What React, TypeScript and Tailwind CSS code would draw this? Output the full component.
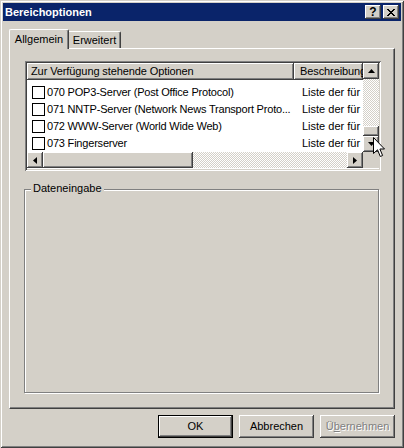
import React from 'react';

const raised =
  'shadow-[inset_-1px_-1px_#404040,inset_1px_1px_#ffffff,inset_-2px_-2px_#808080,inset_2px_2px_#d4d0c8]';
const track = 'bg-[repeating-conic-gradient(#ffffff_0_25%,#d4d0c8_0_50%)] bg-[length:2px_2px]';

const Arrow: React.FC<{ dir: 'up' | 'down' | 'left' | 'right' }> = ({ dir }) => {
  const pts = {
    up: '3.5,0 7,4 0,4',
    down: '0,0 7,0 3.5,4',
    left: '4,0 4,7 0,3.5',
    right: '0,0 4,3.5 0,7',
  }[dir];
  const vertical = dir === 'up' || dir === 'down';
  return (
    <svg width={vertical ? 7 : 4} height={vertical ? 4 : 7} viewBox={vertical ? '0 0 7 4' : '0 0 4 7'}>
      <polygon points={pts} fill="#000" />
    </svg>
  );
};

const ScrollBtn: React.FC<{ dir: 'up' | 'down' | 'left' | 'right' }> = ({ dir }) => (
  <div className={`w-[16px] h-[16px] shrink-0 bg-[#d4d0c8] flex items-center justify-center ${raised}`}>
    <Arrow dir={dir} />
  </div>
);

const rows = [
  '070 POP3-Server (Post Office Protocol)',
  '071 NNTP-Server (Network News Transport Proto...',
  '072 WWW-Server (World Wide Web)',
  '073 Fingerserver',
];

export default function App() {
  return (
    <div className="relative w-[404px] h-[448px] bg-[#d4d0c8] p-[3px] flex flex-col font-['Liberation_Sans',Arial,sans-serif] text-[11px] leading-[13px] text-black shadow-[inset_1px_1px_#d4d0c8,inset_-1px_-1px_#404040,inset_2px_2px_#ffffff,inset_-2px_-2px_#808080] select-none">
      {/* title bar */}
      <div className="h-[18px] shrink-0 bg-[#0a246a] flex items-center pl-[2px] pr-[2px]">
        <span className="flex-1 text-white font-bold">Bereichoptionen</span>
        <div className={`w-[16px] h-[14px] bg-[#d4d0c8] flex items-center justify-center font-bold text-[12px] leading-none ${raised}`}>?</div>
        <div className={`ml-[2px] w-[16px] h-[14px] bg-[#d4d0c8] flex items-center justify-center ${raised}`}>
          <svg width="8" height="7" viewBox="0 0 8 7" shapeRendering="crispEdges">
            <path d="M0 0h2v1h-2zM6 0h2v1h-2zM1 1h2v1h-2zM5 1h2v1h-2zM2 2h4v1h-4zM3 3h2v1h-2zM2 4h4v1h-4zM1 5h2v1h-2zM5 5h2v1h-2zM0 6h2v1h-2zM6 6h2v1h-2z" fill="#000" />
          </svg>
        </div>
      </div>

      <div className="flex-1 flex flex-col px-[6px] pt-[8px] pb-[7px]">
        {/* tabs */}
        <div className="h-[19px] flex items-end relative z-10">
          <div className="w-[60px] h-[20px] -mb-[1px] bg-[#d4d0c8] border-l border-t border-white border-r border-r-[#404040] rounded-t-[2px] shadow-[inset_-1px_0_#808080] flex items-center justify-center pb-[1px]">
            Allgemein
          </div>
          <div className="w-[52px] h-[17px] bg-[#d4d0c8] border-t border-white border-r border-r-[#404040] rounded-tr-[2px] shadow-[inset_-1px_0_#808080] flex items-center justify-center">
            Erweitert
          </div>
        </div>

        {/* panel */}
        <div className="w-[386px] h-[361px] border-l border-t border-white border-r border-b border-r-[#404040] border-b-[#404040] shadow-[inset_-1px_-1px_#808080] flex flex-col">
          {/* list view */}
          <div className="ml-[15px] mt-[12px] w-[356px] h-[110px] p-[2px] bg-white shadow-[inset_1px_1px_#808080,inset_-1px_-1px_#ffffff,inset_2px_2px_#404040,inset_-2px_-2px_#d4d0c8] flex flex-col">
            <div className="flex h-[89px]">
              <div className="flex-1 flex flex-col overflow-hidden">
                <div className="flex h-[17px] shrink-0 tracking-[-0.1px]">
                  <div className={`w-[267px] bg-[#d4d0c8] pl-[4px] flex items-center whitespace-nowrap ${raised}`}>
                    Zur Verfügung stehende Optionen
                  </div>
                  <div className={`flex-1 bg-[#d4d0c8] pl-[6px] flex items-center whitespace-nowrap overflow-hidden ${raised}`}>
                    Beschreibung
                  </div>
                </div>
                <div className="flex flex-col pt-[4px]">
                  {rows.map((r) => (
                    <div key={r} className="flex h-[17px] items-center">
                      <div className="w-[267px] flex items-center pl-[5px] whitespace-nowrap overflow-hidden tracking-[-0.2px]">
                        <div className="w-[13px] h-[13px] border border-black bg-white shrink-0" />
                        <span className="ml-[2px]">{r}</span>
                      </div>
                      <div className="flex-1 pl-[8px] whitespace-nowrap overflow-hidden">Liste der für die</div>
                    </div>
                  ))}
                </div>
              </div>
              {/* vertical scrollbar */}
              <div className="w-[16px] flex flex-col">
                <ScrollBtn dir="up" />
                <div className={`flex-1 ${track}`} />
                <div className={`h-[10px] bg-[#d4d0c8] ${raised}`} />
                <ScrollBtn dir="down" />
              </div>
            </div>
            {/* horizontal scrollbar */}
            <div className="flex h-[16px]">
              <ScrollBtn dir="left" />
              <div className={`w-[150px] bg-[#d4d0c8] ${raised}`} />
              <div className={`flex-1 ${track}`} />
              <ScrollBtn dir="right" />
              <div className="w-[16px] bg-[#d4d0c8]" />
            </div>
          </div>

          {/* group box */}
          <div className="relative ml-[14px] mt-[18px] w-[355px] h-[204px] border border-[#808080] shadow-[inset_1px_1px_#ffffff,1px_1px_#ffffff]">
            <span className="absolute left-[6px] top-[-8px] px-[2px] bg-[#d4d0c8]">Dateneingabe</span>
          </div>
        </div>

        {/* buttons */}
        <div className="mt-[6px] flex justify-end gap-[6px]">
          <div className="w-[75px] h-[23px] border border-black bg-[#d4d0c8]">
            <div className={`w-full h-full flex items-center justify-center ${raised}`}>OK</div>
          </div>
          <div className={`w-[75px] h-[23px] bg-[#d4d0c8] flex items-center justify-center ${raised}`}>Abbrechen</div>
          <div className={`w-[75px] h-[23px] bg-[#d4d0c8] flex items-center justify-center text-[#808080] [text-shadow:1px_1px_0_#ffffff] ${raised}`}>
            <span>
              Ü<span className="underline">b</span>ernehmen
            </span>
          </div>
        </div>
      </div>

      {/* mouse pointer */}
      <svg className="absolute left-[373px] top-[137px]" width="12" height="21" viewBox="0 0 12 21">
        <path d="M0.5 0.5 V16.5 L4.5 12.8 L7.3 19.5 L9.6 18.5 L6.9 12 H11.5 Z" fill="#fff" stroke="#000" strokeWidth="1" strokeLinejoin="miter" />
      </svg>
    </div>
  );
}
